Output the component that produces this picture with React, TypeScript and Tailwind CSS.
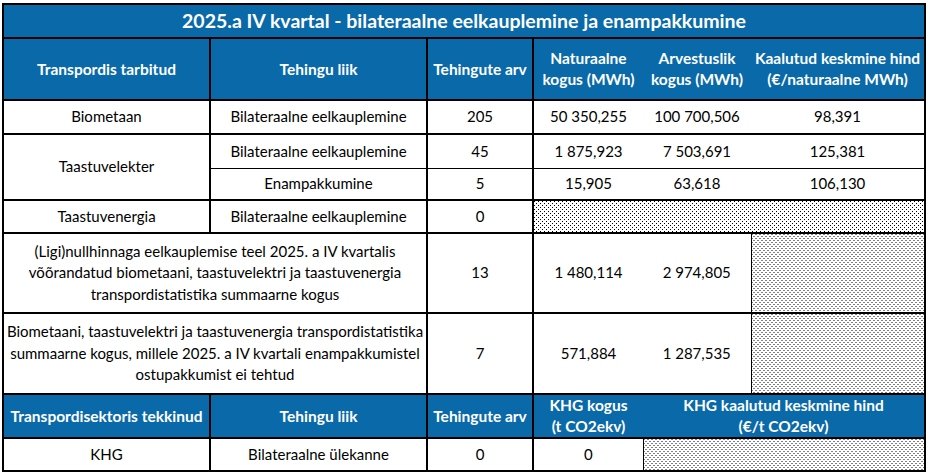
import React from "react";

const B = "border-2 border-black";
const body = "text-center align-middle text-[15px] leading-[21.5px] text-black";
const head = "text-center align-middle text-[15.5px] leading-[21px] font-bold text-white bg-[#0a69a8]";
const hatch =
  "bg-white bg-[image:conic-gradient(at_1px_1px,transparent_75%,#000_0),conic-gradient(at_1px_1px,transparent_75%,#000_0)] bg-[length:4px_4px] bg-[position:0_0,2px_2px]";

export default function App() {
  return (
    <div className="w-[929px] h-[474px] bg-white pt-[3px] pl-[2px]" style={{ fontFamily: "Lato, 'Liberation Sans', sans-serif" }}>
      <table className="border-collapse table-fixed w-[924px]">
        <colgroup>
          <col className="w-[207px]" />
          <col className="w-[217px]" />
          <col className="w-[106px]" />
          <col className="w-[110px]" />
          <col className="w-[108px]" />
          <col className="w-[174px]" />
        </colgroup>
        <tbody>
          <tr className="h-[34px]">
            <td colSpan={6} className={`${B} bg-[#0a69a8] text-white font-bold text-[19.5px] text-center align-middle`}>
              2025.a IV kvartal - bilateraalne eelkauplemine ja enampakkumine
            </td>
          </tr>
          <tr className="h-[62px]">
            <td className={`${B} ${head}`}>Transpordis tarbitud</td>
            <td className={`${B} ${head}`}>Tehingu liik</td>
            <td className={`${B} ${head}`}>Tehingute arv</td>
            <td className={`${B} border-r-0 ${head}`}>Naturaalne<br />kogus (MWh)</td>
            <td className={`${B} border-x-0 ${head}`}>Arvestuslik<br />kogus (MWh)</td>
            <td className={`${B} border-l-0 ${head}`}>Kaalutud keskmine hind<br />(€/naturaalne MWh)</td>
          </tr>
          <tr className="h-[34px]">
            <td className={`${B} ${body}`}>Biometaan</td>
            <td className={`${B} ${body}`}>Bilateraalne eelkauplemine</td>
            <td className={`${B} ${body}`}>205</td>
            <td className={`${B} border-r-0 ${body}`}>50 350,255</td>
            <td className={`${B} border-x-0 ${body}`}>100 700,506</td>
            <td className={`${B} border-l-0 ${body}`}>98,391</td>
          </tr>
          <tr className="h-[34px]">
            <td rowSpan={2} className={`${B} ${body}`}>Taastuvelekter</td>
            <td className={`${B} border-b ${body}`}>Bilateraalne eelkauplemine</td>
            <td className={`${B} border-b ${body}`}>45</td>
            <td className={`${B} border-r-0 border-b ${body}`}>1 875,923</td>
            <td className={`${B} border-x-0 border-b ${body}`}>7 503,691</td>
            <td className={`${B} border-l-0 border-b ${body}`}>125,381</td>
          </tr>
          <tr className="h-[32px]">
            <td className={`${B} border-t ${body}`}>Enampakkumine</td>
            <td className={`${B} border-t ${body}`}>5</td>
            <td className={`${B} border-r-0 border-t ${body}`}>15,905</td>
            <td className={`${B} border-x-0 border-t ${body}`}>63,618</td>
            <td className={`${B} border-l-0 border-t ${body}`}>106,130</td>
          </tr>
          <tr className="h-[33px]">
            <td className={`${B} ${body}`}>Taastuvenergia</td>
            <td className={`${B} ${body}`}>Bilateraalne eelkauplemine</td>
            <td className={`${B} ${body}`}>0</td>
            <td colSpan={3} className={`${B} ${hatch}`}></td>
          </tr>
          <tr className="h-[80px]">
            <td colSpan={2} className={`${B} ${body}`}>
              (Ligi)nullhinnaga eelkauplemise teel 2025. a IV kvartalis
              <br />
              võõrandatud biometaani, taastuvelektri ja taastuvenergia
              <br />
              transpordistatistika summaarne kogus
            </td>
            <td className={`${B} ${body}`}>13</td>
            <td className={`${B} border-r-0 ${body}`}>1 480,114</td>
            <td className={`${B} border-l-0 border-r ${body}`}>2 974,805</td>
            <td className={`${B} border-l ${hatch}`}></td>
          </tr>
          <tr className="h-[81px]">
            <td colSpan={2} className={`${B} ${body}`}>
              Biometaani, taastuvelektri ja taastuvenergia transpordistatistika
              <br />
              summaarne kogus, millele 2025. a IV kvartali enampakkumistel
              <br />
              ostupakkumist ei tehtud
            </td>
            <td className={`${B} ${body}`}>7</td>
            <td className={`${B} border-r-0 ${body}`}>571,884</td>
            <td className={`${B} border-l-0 border-r ${body}`}>1 287,535</td>
            <td className={`${B} border-l ${hatch}`}></td>
          </tr>
          <tr className="h-[44px]">
            <td className={`${B} ${head}`}>Transpordisektoris tekkinud</td>
            <td className={`${B} ${head}`}>Tehingu liik</td>
            <td className={`${B} ${head}`}>Tehingute arv</td>
            <td className={`${B} border-r-0 ${head}`}>KHG kogus<br />(t CO2ekv)</td>
            <td colSpan={2} className={`${B} border-l-0 ${head}`}>KHG kaalutud keskmine hind<br />(€/t CO2ekv)</td>
          </tr>
          <tr className="h-[33px]">
            <td className={`${B} ${body}`}>KHG</td>
            <td className={`${B} ${body}`}>Bilateraalne ülekanne</td>
            <td className={`${B} ${body}`}>0</td>
            <td className={`${B} border-r ${body}`}>0</td>
            <td colSpan={2} className={`${B} border-l ${hatch}`}></td>
          </tr>
        </tbody>
      </table>
    </div>
  );
}
